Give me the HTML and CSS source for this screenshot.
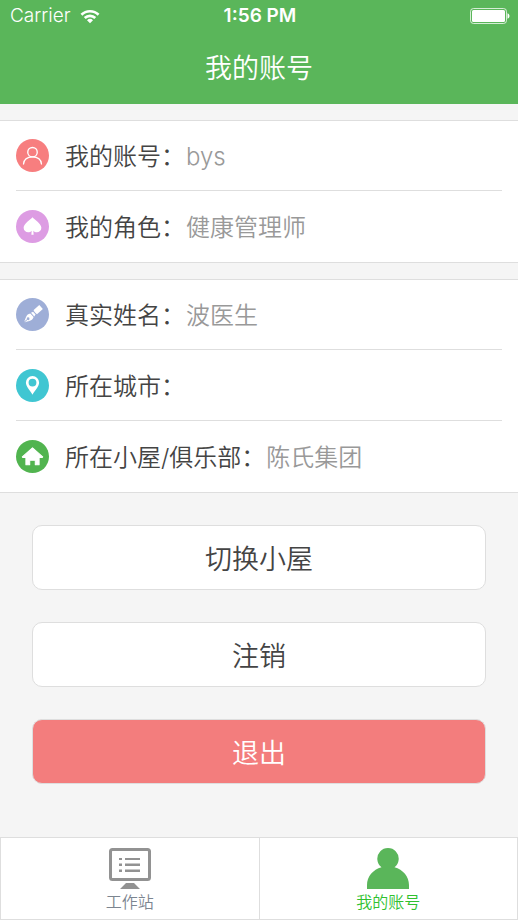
FILE: index.html
```html
<!DOCTYPE html>
<html lang="zh-CN">
<head>
<meta charset="utf-8">
<meta name="viewport" content="width=device-width, initial-scale=1">
<title>我的账号</title>
<link rel="stylesheet" href="styles.css">
</head>
<body>
<div class="app">
  <header class="header">
    <div class="status">
      <div class="status-left">
        <span>Carrier</span>
        <svg class="wifi" viewBox="0 0 20 15" aria-hidden="true">
          <path d="M0.5 4.8a13.5 13.5 0 0 1 19 0l-1.900 1.900a10.800 10.800 0 0 0-15.200 0z"/>
          <path d="M3.800 8.100a8.800 8.800 0 0 1 12.400 0l-1.900 1.900a6.100 6.100 0 0 0-8.600 0z"/>
          <path d="M7 11.300a4.300 4.300 0 0 1 6 0l-3 3z"/>
        </svg>
      </div>
      <span class="time">1:56 PM</span>
      <div class="status-right">
        <svg class="battery" viewBox="0 0 40 16" aria-hidden="true">
          <rect x="0.5" y="0.5" width="36" height="15" rx="3" fill="none" stroke="#fff" stroke-opacity=".75"/>
          <rect x="2" y="2" width="33" height="12" rx="1.5" fill="#fff"/>
          <path d="M37.500 5.200c2.600.8 2.600 4.800 0 5.600z" fill="#fff"/>
        </svg>
      </div>
    </div>
    <h1 class="title">我的账号</h1>
  </header>

  <main class="content">
    <dl class="card">
      <div class="row">
        <svg class="icon" viewBox="0 0 32 32" aria-hidden="true">
          <circle cx="16" cy="16" r="16" fill="#f77e7f"/>
          <g fill="none" stroke="#fff" stroke-width="1.3" stroke-linecap="round">
            <circle cx="16" cy="12.800" r="4.600"/>
            <path d="M7.300 24.200c.4-4.400 3.800-6.900 8.700-6.900s8.300 2.500 8.700 6.900"/>
          </g>
        </svg>
        <dt>我的账号：</dt><dd>bys</dd>
      </div>
      <div class="row">
        <svg class="icon" viewBox="0 0 32 32" aria-hidden="true">
          <circle cx="16" cy="16" r="16" fill="#dd9ce3"/>
          <path fill="#fff" d="M16 7c1.800 2.400 8.600 6 8.600 10.200 0 4.400-5.400 5.600-7.800 2.800l.3 4h-2.200l.3-4c-2.400 2.800-7.800 1.600-7.800-2.800C7.400 13 14.200 9.400 16 7z"/>
        </svg>
        <dt>我的角色：</dt><dd>健康管理师</dd>
      </div>
    </dl>

    <dl class="card">
      <div class="row">
        <svg class="icon" viewBox="0 0 32 32" aria-hidden="true">
          <circle cx="16" cy="16" r="16" fill="#9eaed7"/>
          <g transform="translate(16.500 15.800) rotate(48)">
            <path fill="#fff" d="M-2.600-10.500h5.200v7.300c0 .8-5.200.8-5.200 0z"/>
            <path fill="#fff" d="M-1.800-1.700h3.600l.6 2.200h-4.800zM-2.400 1.400h4.800c2.400 3.400-1 6.800-2 10V7.600a1.300 1.300 0 1 0-.8 0v3.800c-1-3.200-4.400-6.600-2-10z"/>
          </g>
        </svg>
        <dt>真实姓名：</dt><dd>波医生</dd>
      </div>
      <div class="row">
        <svg class="icon" viewBox="0 0 32 32" aria-hidden="true">
          <circle cx="16" cy="16" r="16" fill="#40c6d2"/>
          <path fill="#fff" fill-rule="evenodd" d="M16 6.800a6.400 6.400 0 0 1 6.400 6.400c0 4-4 7.600-6.400 11.800-2.400-4.200-6.400-7.800-6.400-11.800A6.400 6.400 0 0 1 16 6.800zm0 2.600a3.800 3.800 0 1 0 0 7.600 3.800 3.800 0 0 0 0-7.600z"/>
        </svg>
        <dt>所在城市：</dt><dd></dd>
      </div>
      <div class="row">
        <svg class="icon" viewBox="0 0 32 32" aria-hidden="true">
          <circle cx="16" cy="16" r="16" fill="#51b44f"/>
          <path fill="#fff" stroke="#fff" stroke-linejoin="round" d="M16 7.600l9.900 8.800-.6.600h-2.900v7.100h-3.700v-4.500h-5.400v4.500H9.600V17H6.700l-.6-.6z"/>
        </svg>
        <dt>所在小屋/俱乐部：</dt><dd>陈氏集团</dd>
      </div>
    </dl>

    <div class="actions">
      <button class="btn" type="button">切换小屋</button>
      <button class="btn" type="button">注销</button>
      <button class="btn btn-danger" type="button">退出</button>
    </div>
  </main>

  <nav class="tabs">
    <a class="tab" href="#work">
      <svg class="tab-icon" viewBox="0 0 42 41" aria-hidden="true">
        <rect x="1.500" y="1.500" width="39" height="30" rx="2" fill="none" stroke="#929292" stroke-width="3"/>
        <path fill="#929292" d="M17 35h8l6 6H11zM10 10h3v2h-3zM16 10h15v2H16zM10 15.500h3v2.500h-3zM16 15.500h15v2.500H16zM10 21.500h3v2.500h-3zM16 21.500h15v2.500H16z"/>
      </svg>
      <span>工作站</span>
    </a>
    <a class="tab tab-active" href="#account" aria-current="page">
      <svg class="tab-icon" viewBox="0 0 42 41" aria-hidden="true">
        <path fill="#5ab65a" d="M14.500 19.200a10.700 10.700 0 1 1 13 0C36 21.500 42 28.500 42 37v4H0v-4c0-8.500 6-15.500 14.500-17.800z"/>
      </svg>
      <span>我的账号</span>
    </a>
  </nav>
</div>
</body>
</html>
```
FILE: styles.css
```css
* {
  box-sizing: border-box;
}

body {
  margin: 0;
  background: #f5f5f5;
  color: #444;
  font-family: Inter, "Noto Sans CJK SC", sans-serif;
  font-weight: 350;
}

.app {
  display: flex;
  flex-direction: column;
  min-height: 100vh;
}

.header {
  background: #5ab65a;
  color: #fff;
}

.status {
  display: grid;
  grid-template-columns: 1fr auto 1fr;
  align-items: center;
  height: 32px;
  padding: 0 8px 0 10px;
  font-size: 19px;
  line-height: 32px;
}

.status-left {
  display: flex;
  align-items: center;
  gap: 9px;
}

.wifi {
  width: 20px;
  height: 15px;
  fill: #fff;
}

.time {
  font-weight: 600;
}

.status-right {
  display: flex;
  justify-content: flex-end;
}

.battery {
  width: 40px;
  height: 16px;
}

.title {
  margin: 0;
  padding-top: 2px;
  font-size: 27px;
  font-weight: 350;
  line-height: 70px;
  text-align: center;
}

.content {
  flex: 1;
}

.card {
  margin: 16px 0 0;
  padding: 0 16px 1px;
  background: #fff;
  border-top: 1px solid #dedede;
  border-bottom: 1px solid #dedede;
}

.row {
  display: flex;
  align-items: center;
  min-height: 69px;
  font-size: 24px;
  line-height: 36px;
}

.row + .row {
  min-height: 71px;
  border-top: 1px solid #dedede;
}

.icon {
  flex: none;
  width: 33px;
  height: 33px;
  margin-right: 16px;
}

dt,
dd {
  padding-top: 3px;
}

dd {
  margin: 0 0 0 1px;
  color: #999;
}

.actions {
  display: flex;
  flex-direction: column;
  gap: 32px;
  padding: 32px;
}

.btn {
  height: 65px;
  padding: 0;
  border: 1px solid #dedede;
  border-radius: 10px;
  background: #fff;
  color: #444;
  font-family: inherit;
  font-size: 27px;
  font-weight: inherit;
}

.btn-danger {
  background: #f37d7d;
  color: #fff;
}

.tabs {
  display: flex;
  background: #fff;
  border: 1px solid #dedede;
}

.tab {
  flex: 1;
  display: flex;
  flex-direction: column;
  align-items: center;
  padding: 10px 0 3px;
  color: #7c8590;
  font-size: 16px;
  line-height: 27px;
  text-decoration: none;
}

.tab + .tab {
  border-left: 1px solid #dedede;
}

.tab-icon {
  width: 42px;
  height: 41px;
}

.tab-active {
  color: #2fc12f;
}
```
